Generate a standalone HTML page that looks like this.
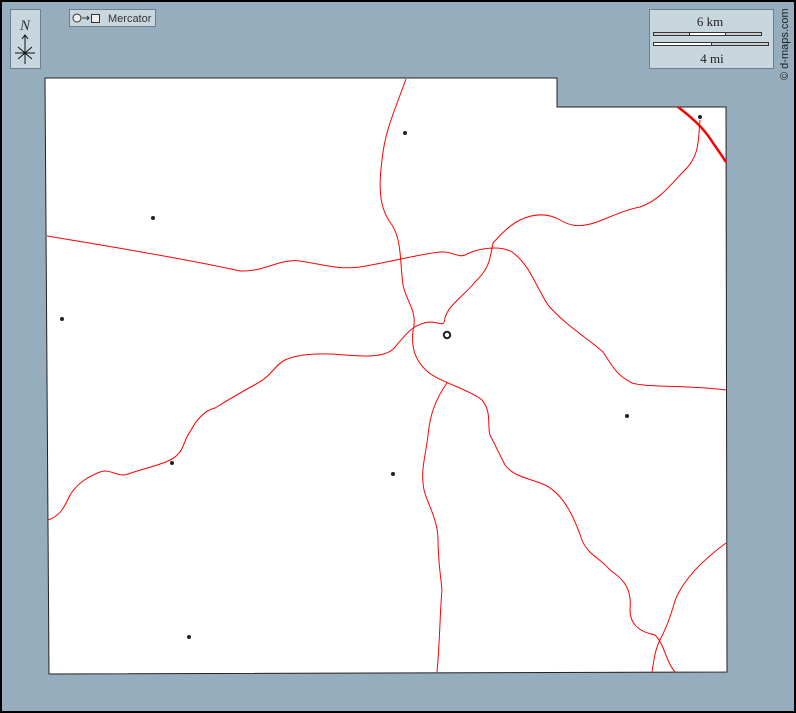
<!DOCTYPE html><html><head><style>body{margin:0}svg{display:block}</style></head><body>
<svg width="796" height="713" xmlns="http://www.w3.org/2000/svg" font-family="Liberation Sans, sans-serif">
<rect x="1" y="1" width="794" height="711" fill="#95adbd" stroke="#000" stroke-width="2"/>
<polygon points="45,78 557,78 557,107 726,107 727,672 49,674" fill="#fff" stroke="#222" stroke-width="1"/>
<g fill="none" stroke="#f00" stroke-width="1">
<path d="M47,236 C120,248 200,262 240,271 C265,272 280,258 300,261 C320,264 340,270 360,267 C390,262 420,254 440,252 C452,251 458,258 465,255 C478,248 500,245 512,252 C530,265 535,285 548,305 C565,325 590,340 603,352 C612,365 615,374 632,383 C650,388 690,385 726,390"/>
<path d="M406,79 C395,110 385,130 382,160 C378,190 380,210 392,225 C402,240 400,265 403,285 C406,300 416,310 414,325 C410,345 414,360 428,372 C440,382 470,390 482,400 C492,412 487,425 490,435 C495,445 500,455 505,465 C515,478 530,478 545,485 C565,495 575,520 582,540 C588,555 600,558 610,570 C625,580 632,590 630,610 C630,625 640,632 655,635 C665,645 665,660 675,672"/>
<path d="M48,520 C60,516 64,508 70,495 C78,482 90,476 100,472 C110,468 118,478 128,474 C145,468 158,466 170,460 C185,453 183,440 190,432 C196,420 205,410 215,408 C228,400 245,390 258,383 C272,375 275,365 285,360 C300,353 325,353 345,355 C370,357 388,357 396,346 C405,335 414,323 430,322 C440,322 444,328 445,318 C448,305 465,295 475,282 C490,268 490,258 493,243 C502,233 510,225 520,220 C535,213 548,213 560,220 C570,226 580,228 597,222 C615,215 625,210 640,207 C660,200 670,185 685,170 C700,155 698,140 700,120"/>
<path d="M447,383 C435,400 430,415 428,435 C426,455 420,470 424,490 C428,505 438,520 438,540 C438,560 440,570 442,590 C440,610 440,640 437,672"/>
<path d="M652,672 C654,660 655,648 662,636 C670,620 672,610 676,598 C684,580 700,562 726,543"/>
<path d="M678,107 C695,120 705,130 713,143 C718,150 722,156 726,162" stroke-width="2.5"/>
</g>
<g fill="#222">
<circle cx="405" cy="133" r="2"/><circle cx="153" cy="218" r="2"/><circle cx="62" cy="319" r="2"/>
<circle cx="700" cy="117" r="2"/><circle cx="627" cy="416" r="2"/><circle cx="393" cy="474" r="2"/>
<circle cx="172" cy="463" r="2"/><circle cx="189" cy="637" r="2"/>
</g>
<circle cx="447" cy="335" r="3.2" fill="none" stroke="#222" stroke-width="2"/>
<rect x="10.5" y="9.5" width="30" height="59" fill="#c8d6de" stroke="#6b7f8c"/>
<text x="25" y="30" font-family="Liberation Serif, serif" font-style="italic" font-size="15" text-anchor="middle" fill="#333">N</text>
<path d="M25,35 V64 M22,39 L25,35 L28,39 M15,53 H35 M18,47 L32,59 M32,47 L18,59" stroke="#111" fill="none" stroke-width="1"/>
<rect x="69.5" y="9.5" width="86" height="17" fill="#c8d6de" stroke="#6b7f8c"/>
<circle cx="77" cy="18" r="4" fill="#eee" stroke="#333"/>
<path d="M82,18 H89 M87,16 L89,18 L87,20" stroke="#333" fill="none"/>
<rect x="91.5" y="14.5" width="8" height="8" fill="#eee" stroke="#333"/>
<text x="108" y="22" font-size="11" fill="#333">Mercator</text>
<rect x="649.5" y="9.5" width="124" height="59" fill="#c8d6de" stroke="#6b7f8c"/>
<text x="710" y="26" font-family="Liberation Serif, serif" font-size="13" text-anchor="middle" fill="#222">6 km</text>
<rect x="653.5" y="32.5" width="108" height="3" fill="#ccc" stroke="#333"/>
<rect x="689.5" y="32.5" width="36" height="3" fill="#fff" stroke="#333"/>
<rect x="653.5" y="42.5" width="115" height="3" fill="#ccc" stroke="#333"/>
<rect x="653.5" y="42.5" width="58" height="3" fill="#fff" stroke="#333"/>
<text x="712" y="63" font-family="Liberation Serif, serif" font-size="13" text-anchor="middle" fill="#222">4 mi</text>
<text transform="translate(788,80) rotate(-90)" font-size="11" fill="#222">© d-maps.com</text>
</svg>
</body></html>
